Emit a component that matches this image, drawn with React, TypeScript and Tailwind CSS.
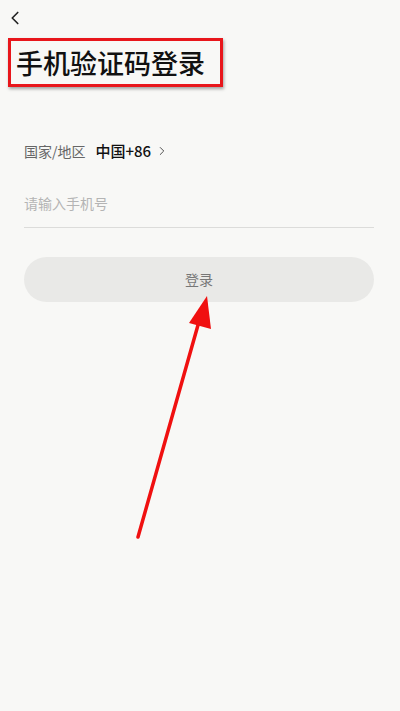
import { ChevronLeft, ChevronRight } from "lucide-react";

const font = {
  fontFamily: '"Noto Sans CJK SC", "Noto Sans", sans-serif',
};

const App = () => {
  return (
    <div
      className="w-[400px] h-[711px] bg-[#f8f8f6] relative overflow-hidden"
      style={font}
    >
      {/* back */}
      <div className="h-[38px] flex items-center pl-[4px] pb-[2px]">
        <ChevronLeft size={22} strokeWidth={1.8} className="text-[#222]" />
      </div>

      {/* title with highlight box */}
      <div className="pl-[8px]">
        <div className="inline-flex items-center h-[49px] pl-[5px] pr-[15px] border-[3px] border-[#e8161b] shadow-[1px_2px_3px_rgba(0,0,0,0.35)]">
          <h1 className="text-[27px] leading-none font-medium text-[#111]">
            手机验证码登录
          </h1>
        </div>
      </div>

      <div className="pl-[24px] pr-[26px] mt-[50px]">
        {/* country */}
        <div className="flex items-center h-[28px]">
          <span className="text-[14px] text-[#666]">国家/地区</span>
          <span className="ml-[10px] text-[15px] font-medium text-[#111]">中国+86</span>
          <ChevronRight size={14} strokeWidth={1.6} className="ml-[4px] text-[#444]" />
        </div>

        {/* phone input */}
        <div className="mt-[28px] pb-[14px] border-b border-[#dcdcda]">
          <div className="h-[20px] flex items-center text-[14px] text-[#b4b4b4]">
            请输入手机号
          </div>
        </div>

        {/* login button */}
        <button className="mt-[29px] w-full h-[45px] rounded-full bg-[#e9e9e7] text-[14px] text-[#777] flex items-center justify-center">
          登录
        </button>
      </div>

      {/* annotation arrow */}
      <svg
        className="absolute left-0 top-0 pointer-events-none"
        width="400"
        height="711"
        viewBox="0 0 400 711"
      >
        <line
          x1="138"
          y1="537"
          x2="200"
          y2="318"
          stroke="#f01010"
          strokeWidth="3.5"
          strokeLinecap="round"
        />
        <polygon points="207,296 189,323 211,329" fill="#f01010" />
      </svg>
    </div>
  );
};

export default App;
